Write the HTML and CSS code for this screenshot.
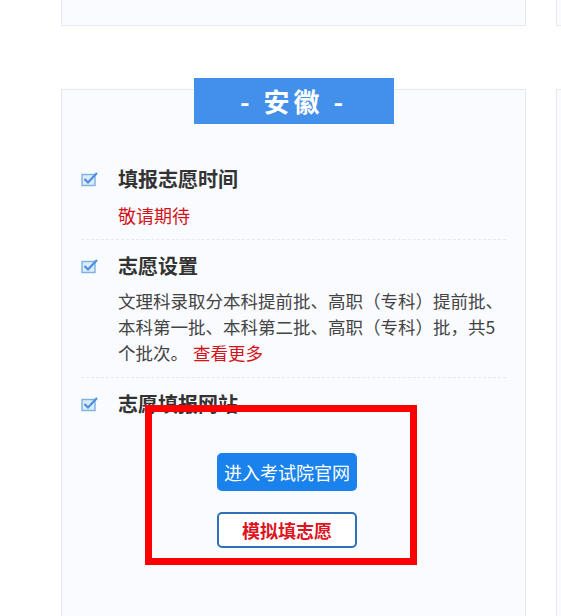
FILE: index.html
```html
<!DOCTYPE html>
<html>
<head>
    <title>安徽志愿填报</title>
    <link rel="stylesheet" href="styles.css">
</head>
<body>
    <div class="grid">
        <div class="card card-top"></div>
        <div class="card card-top"></div>

        <div class="card province">
            <div class="tag">-&nbsp;安徽&nbsp;-</div>
            <ul class="items">
                <li class="item">
                    <h3 class="item-title">
                        <svg class="check" width="18" height="16" viewBox="0 0 18 16">
                            <rect x="1" y="3.5" width="13" height="11" fill="#dcebfa" stroke="#7fb0e4" stroke-width="1.4"/>
                            <path d="M3.5 8 L7 11.5 L16 2" fill="none" stroke="#4a8fd8" stroke-width="2.2"/>
                        </svg>
                        填报志愿时间
                    </h3>
                    <p class="item-text red">敬请期待</p>
                </li>
                <li class="item">
                    <h3 class="item-title">
                        <svg class="check" width="18" height="16" viewBox="0 0 18 16">
                            <rect x="1" y="3.5" width="13" height="11" fill="#dcebfa" stroke="#7fb0e4" stroke-width="1.4"/>
                            <path d="M3.5 8 L7 11.5 L16 2" fill="none" stroke="#4a8fd8" stroke-width="2.2"/>
                        </svg>
                        志愿设置
                    </h3>
                    <p class="item-text small">文理科录取分本科提前批、高职（专科）提前批、本科第一批、本科第二批、高职（专科）批，共5<span>个批次。</span><a class="more" href="#">查看更多</a></p>
                </li>
                <li class="item last">
                    <h3 class="item-title">
                        <svg class="check" width="18" height="16" viewBox="0 0 18 16">
                            <rect x="1" y="3.5" width="13" height="11" fill="#dcebfa" stroke="#7fb0e4" stroke-width="1.4"/>
                            <path d="M3.5 8 L7 11.5 L16 2" fill="none" stroke="#4a8fd8" stroke-width="2.2"/>
                        </svg>
                        志愿填报网站
                    </h3>
                    <div class="buttons">
                        <a class="btn btn-site" href="#">进入考试院官网</a>
                        <a class="btn btn-mock" href="#">模拟填志愿</a>
                    </div>
                </li>
            </ul>
            <!-- annotation box drawn over the buttons -->
            <div class="mark"></div>
        </div>
        <div class="card province"></div>
    </div>
</body>
</html>
```

FILE: styles.css
```css
body {
    margin: 0;
    background-color: #fff;
    font-family: "Noto Sans CJK SC", "Microsoft YaHei", sans-serif;
    color: #333;
    overflow: hidden;
}

.grid {
    display: grid;
    grid-template-columns: 465px 465px;
    column-gap: 30px;
    row-gap: 63px;
    padding-left: 61px;
}

.card {
    background-color: #f9fbfe;
    border: 1px solid #e8e9ec;
}

.card-top {
    height: 25px;
    border-top: none;
}

.province {
    position: relative;
    height: 560px;
}

.tag {
    width: 200px;
    height: 46px;
    margin: -12px auto 0;
    background-color: #4290e9;
    color: #fff;
    font-size: 26px;
    font-weight: bold;
    line-height: 46px;
    text-align: center;
    letter-spacing: 4px;
    white-space: pre;
}

.items {
    list-style: none;
    margin: 29px 19px 0 19px;
    padding: 0;
}

.item {
    padding: 11px 0 11px;
    border-bottom: 1px dashed #e4e8ef;
}

.item.last {
    border-bottom: none;
}

.item-title {
    display: flex;
    align-items: center;
    margin: 0;
    font-size: 20px;
    line-height: 30px;
    font-weight: bold;
    color: #333;
}

.check {
    margin-right: 19px;
}

.item-text {
    margin: 8px 0 0 37px;
    font-size: 18px;
    line-height: 26px;
    color: #444;
}

.item-text.small {
    margin-top: 7px;
    font-size: 17.5px;
}

.red, .more {
    color: #d4141c;
    text-decoration: none;
}

.more {
    display: inline-block;
    margin-left: 5px;
}

.buttons {
    display: flex;
    flex-direction: column;
    gap: 21px;
    margin: 34px 0 0 136px;
}

.btn {
    box-sizing: border-box;
    width: 140px;
    border-radius: 5px;
    font-size: 18px;
    text-align: center;
    text-decoration: none;
}

.btn-site {
    height: 38px;
    line-height: 38px;
    background-color: #1a82ec;
    color: #fff;
}

.btn-mock {
    height: 36px;
    line-height: 32px;
    background-color: #fff;
    border: 2px solid #2f70b8;
    color: #e0141e;
    font-weight: bold;
}

.mark {
    position: absolute;
    left: 83px;
    top: 315px;
    width: 272px;
    height: 160px;
    box-sizing: border-box;
    border: 7px solid #f00;
}
```
